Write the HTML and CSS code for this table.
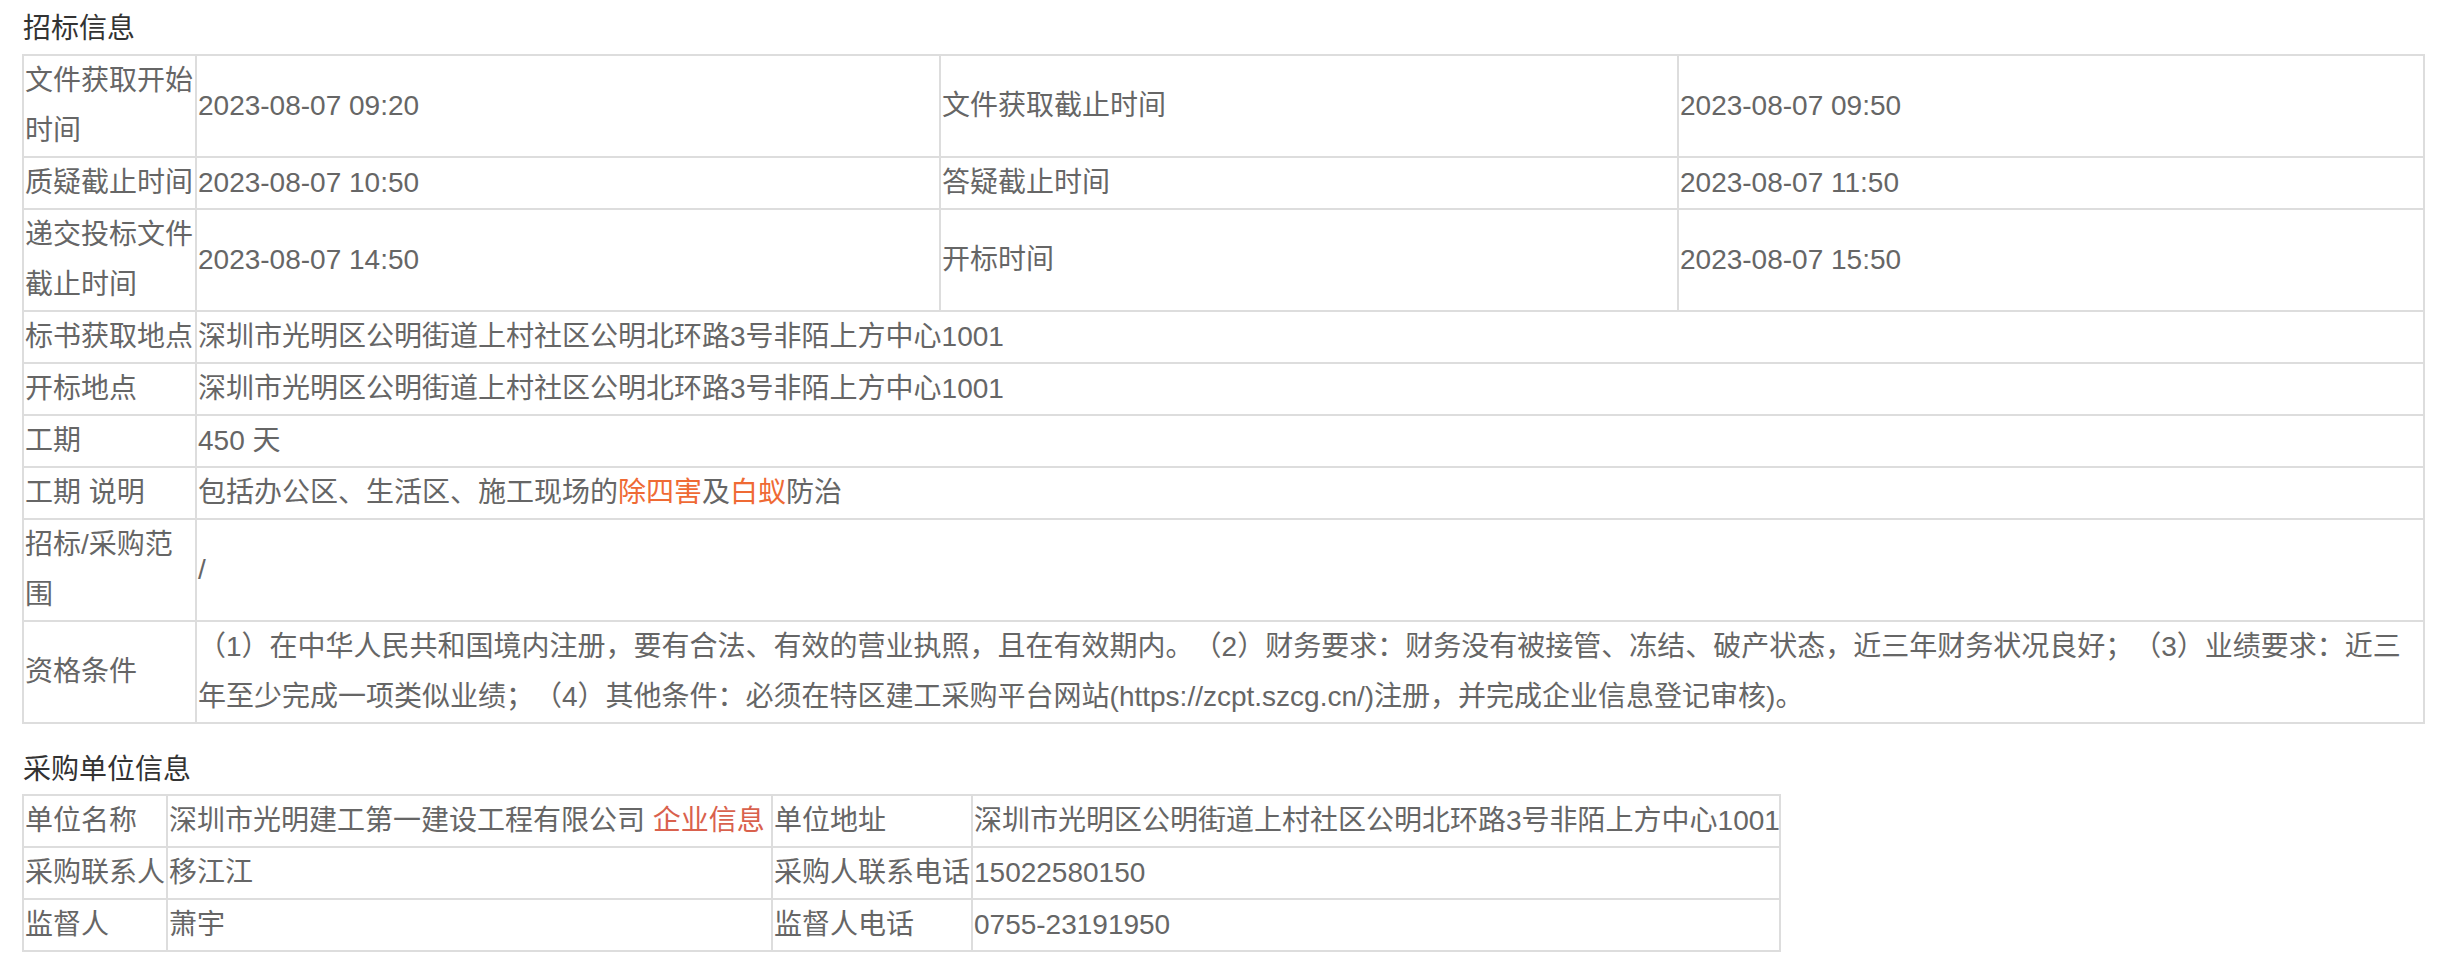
FILE: index.html
```html
<!DOCTYPE html>
<html lang="zh-CN">
<head>
<meta charset="utf-8">
<title>招标信息</title>
<link rel="stylesheet" href="styles.css">
</head>
<body>
<div class="page">
  <section class="block">
    <h2 class="block-title">招标信息</h2>
    <table class="info info-bid">
      <colgroup>
        <col class="c-bid-1"><col class="c-bid-2"><col class="c-bid-3"><col class="c-bid-4">
      </colgroup>
      <tr>
        <td>文件获取开始时间</td>
        <td>2023-08-07 09:20</td>
        <td>文件获取截止时间</td>
        <td>2023-08-07 09:50</td>
      </tr>
      <tr>
        <td>质疑截止时间</td>
        <td>2023-08-07 10:50</td>
        <td>答疑截止时间</td>
        <td>2023-08-07 11:50</td>
      </tr>
      <tr>
        <td>递交投标文件截止时间</td>
        <td>2023-08-07 14:50</td>
        <td>开标时间</td>
        <td>2023-08-07 15:50</td>
      </tr>
      <tr>
        <td>标书获取地点</td>
        <td colspan="3">深圳市光明区公明街道上村社区公明北环路3号非陌上方中心1001</td>
      </tr>
      <tr>
        <td>开标地点</td>
        <td colspan="3">深圳市光明区公明街道上村社区公明北环路3号非陌上方中心1001</td>
      </tr>
      <tr>
        <td>工期</td>
        <td colspan="3">450 天</td>
      </tr>
      <tr>
        <td>工期 说明</td>
        <td colspan="3">包括办公区、生活区、施工现场的<span class="hl">除四害</span>及<span class="hl">白蚁</span>防治</td>
      </tr>
      <tr>
        <td>招标/采购范围</td>
        <td colspan="3">/</td>
      </tr>
      <tr>
        <td>资格条件</td>
        <td colspan="3">（1）在中华人民共和国境内注册，要有合法、有效的营业执照，且在有效期内。（2）财务要求：财务没有被接管、冻结、破产状态，近三年财务状况良好；（3）业绩要求：近三<br>年至少完成一项类似业绩；（4）其他条件：必须在特区建工采购平台网站(https://zcpt.szcg.cn/)注册，并完成企业信息登记审核)。</td>
      </tr>
    </table>
  </section>

  <section class="block block-buyer">
    <h2 class="block-title">采购单位信息</h2>
    <table class="info info-buyer">
      <colgroup>
        <col class="c-buy-1"><col class="c-buy-2"><col class="c-buy-3"><col class="c-buy-4">
      </colgroup>
      <tr>
        <td>单位名称</td>
        <td>深圳市光明建工第一建设工程有限公司 <a class="link" href="#">企业信息</a></td>
        <td>单位地址</td>
        <td>深圳市光明区公明街道上村社区公明北环路3号非陌上方中心1001</td>
      </tr>
      <tr>
        <td>采购联系人</td>
        <td>移江江</td>
        <td>采购人联系电话</td>
        <td>15022580150</td>
      </tr>
      <tr>
        <td>监督人</td>
        <td>萧宇</td>
        <td>监督人电话</td>
        <td>0755-23191950</td>
      </tr>
    </table>
  </section>
</div>
</body>
</html>
```

FILE: styles.css
```css
html, body {
  margin: 0;
  padding: 0;
  background: #ffffff;
}

body {
  font-family: "Liberation Sans", "Noto Sans CJK SC", sans-serif;
  font-size: 28px;
  color: #666666;
  text-spacing-trim: space-all;
}

.page {
  padding: 8px 0 0 22px;
}

.block-title {
  margin: 0;
  font-size: 28px;
  font-weight: normal;
  line-height: 42px;
  color: #333333;
  padding-left: 1px;
}

.block-buyer {
  margin-top: 25px;
}

.info {
  border-collapse: collapse;
  table-layout: fixed;
  margin-top: 4px;
}

.info td {
  border: 2px solid #dddddd;
  padding: 0 1px;
  line-height: 50px;
  vertical-align: middle;
}

.info-bid {
  width: 2401px;
}

.c-bid-1 { width: 173px; }
.c-bid-2 { width: 744px; }
.c-bid-3 { width: 738px; }
.c-bid-4 { width: 746px; }

.info-buyer {
  width: 1757px;
  margin-top: 3px;
}

.info-buyer td {
  white-space: nowrap;
}

.c-buy-1 { width: 144px; }
.c-buy-2 { width: 605px; }
.c-buy-3 { width: 200px; }
.c-buy-4 { width: 808px; }

.hl {
  color: #ef6a34;
}

.link {
  color: #d9614d;
  text-decoration: none;
}
```
